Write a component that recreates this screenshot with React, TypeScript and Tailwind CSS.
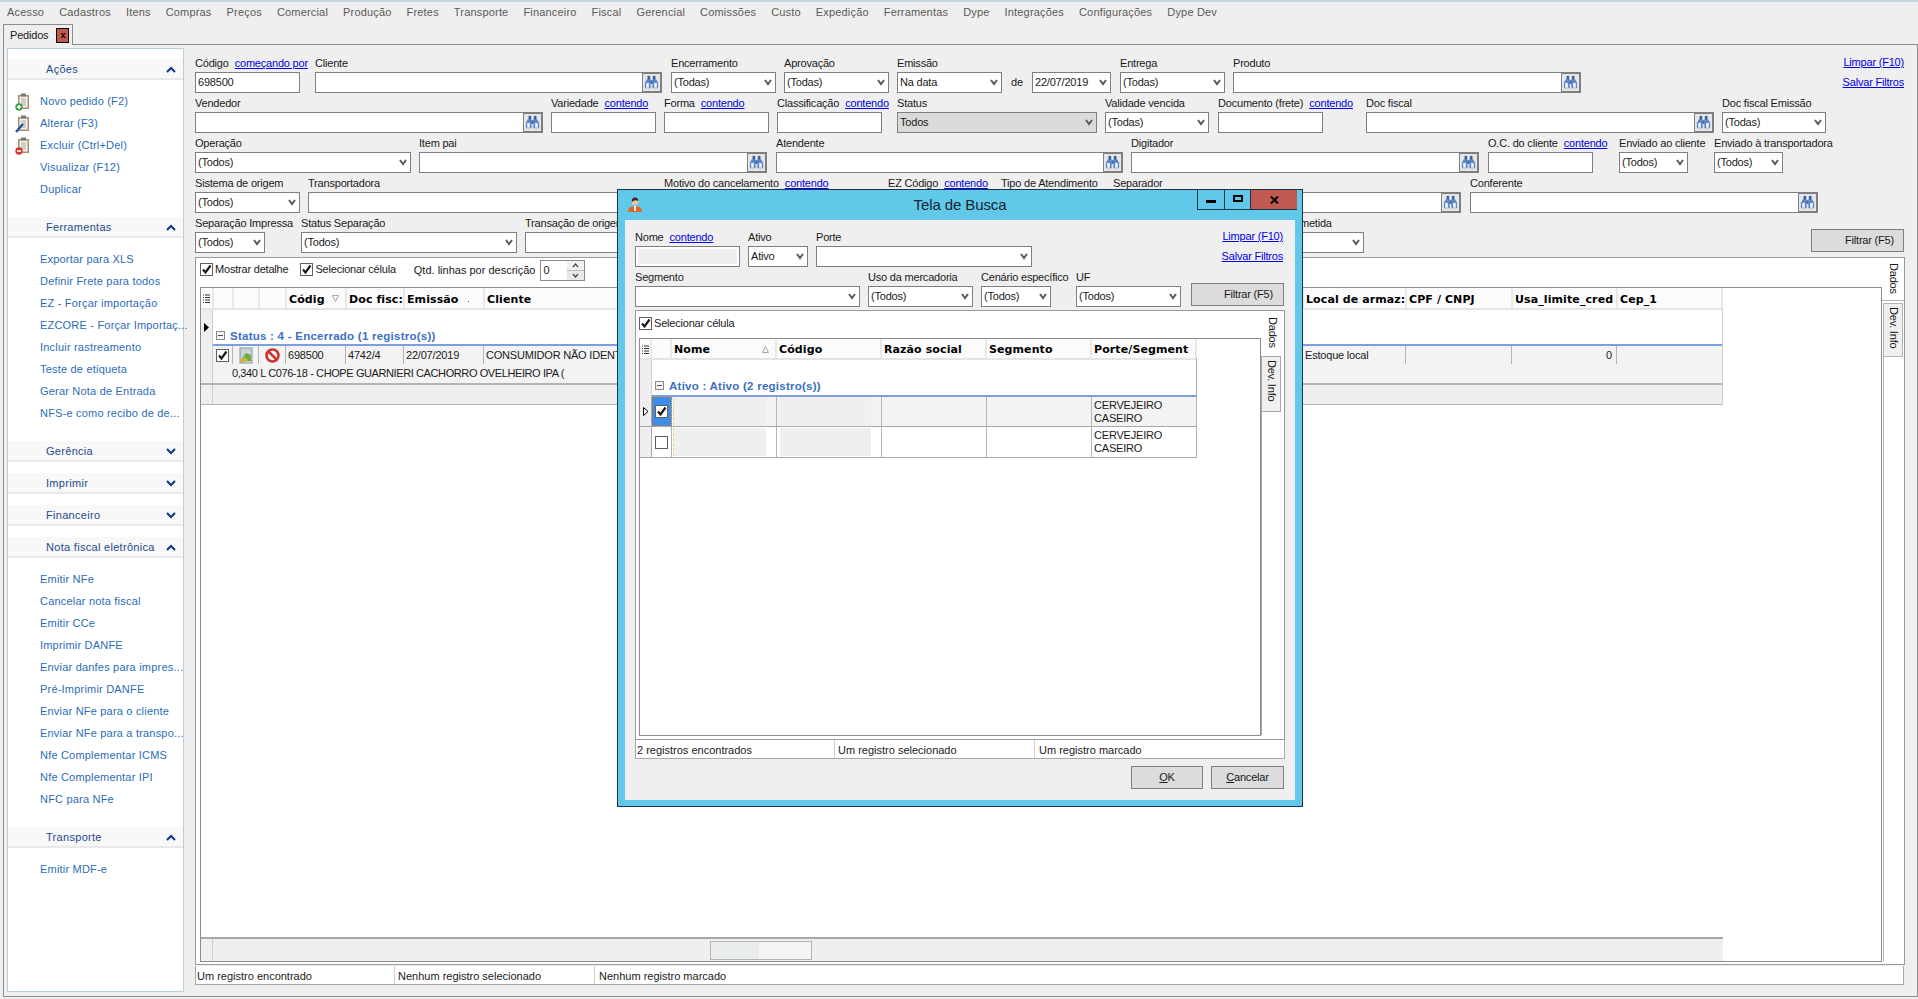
import type { ReactNode } from "react";

const menuItems = [
  "Acesso", "Cadastros", "Itens", "Compras", "Preços", "Comercial", "Produção", "Fretes", "Transporte",
  "Financeiro", "Fiscal", "Gerencial", "Comissões", "Custo", "Expedição", "Ferramentas", "Dype",
  "Integrações", "Configurações", "Dype Dev",
];

const notaItems = [
  "Emitir NFe", "Cancelar nota fiscal", "Emitir CCe", "Imprimir DANFE", "Enviar danfes para impres...",
  "Pré-Imprimir DANFE", "Enviar NFe para o cliente", "Enviar NFe para a transpo...", "Nfe Complementar ICMS",
  "Nfe Complementar IPI", "NFC para NFe",
];

const ferramentasItems = [
  "Exportar para XLS", "Definir Frete para todos", "EZ - Forçar importação", "EZCORE - Forçar Importaç...",
  "Incluir rastreamento", "Teste de etiqueta", "Gerar Nota de Entrada", "NFS-e como recibo de de...",
];

function Chevron({ up }: { up?: boolean }) {
  return (
    <svg width="10" height="7" viewBox="0 0 10 7" className="shrink-0">
      <path d={up ? "M1 6 L5 2 L9 6" : "M1 1 L5 5 L9 1"} fill="none" stroke="#0b3a8c" strokeWidth="2" />
    </svg>
  );
}

function SmallArrow() {
  return (
    <svg width="8" height="7" viewBox="0 0 8 7" className="shrink-0">
      <path d="M1 1 L4 5 L7 1" fill="none" stroke="#5a5a5a" strokeWidth="2" />
    </svg>
  );
}

function Binoculars() {
  return (
    <svg width="15" height="15" viewBox="0 0 17 17">
      <rect x="4" y="1" width="3" height="5" fill="#3a62a6" />
      <rect x="10" y="1" width="3" height="5" fill="#3a62a6" />
      <rect x="7" y="6" width="3" height="4" fill="#3a62a6" />
      <path d="M3 5 H7.5 V15 H1 V9 Z" fill="#5c86c8" />
      <path d="M14 5 H9.5 V15 H16 V9 Z" fill="#5c86c8" />
      <rect x="2.5" y="9" width="3" height="5.5" fill="#eef4fc" />
      <rect x="11.5" y="9" width="3" height="5.5" fill="#eef4fc" />
    </svg>
  );
}

function Clipboard({ kind }: { kind: "add" | "edit" | "del" }) {
  return (
    <svg width="15" height="18" viewBox="0 0 15 18">
      <rect x="3" y="2" width="11" height="14" fill="#a8906c" />
      <rect x="4.5" y="3.5" width="8" height="11" fill="#f4f4f0" />
      <rect x="6" y="0.5" width="5" height="3" fill="#777" />
      <path d="M6 6 H11 M6 8 H11 M6 10 H11 M6 12 H11" stroke="#aaa" strokeWidth="1" />
      {kind === "add" && (
        <>
          <circle cx="4" cy="14" r="3.7" fill="#3f9e4d" />
          <path d="M2 14 H6 M4 12 V16" stroke="#fff" strokeWidth="1.5" />
        </>
      )}
      {kind === "edit" && <path d="M1 17 L8 9" stroke="#1f56a8" strokeWidth="2.4" />}
      {kind === "del" && (
        <>
          <circle cx="4" cy="14" r="3.7" fill="#d6342c" />
          <path d="M2 14 H6" stroke="#fff" strokeWidth="1.6" />
        </>
      )}
    </svg>
  );
}

function Tick() {
  return (
    <svg width="11" height="11" viewBox="0 0 11 11">
      <path d="M2 5.5 L4.5 8.5 L9.5 1.5" fill="none" stroke="#1a1a1a" strokeWidth="2.2" />
    </svg>
  );
}

function CheckBox({ checked = true }: { checked?: boolean }) {
  return (
    <span className="flex h-[13px] w-[13px] shrink-0 items-center justify-center border border-[#5f5f5f] bg-white">
      {checked && <Tick />}
    </span>
  );
}

function MinusBox() {
  return (
    <span className="flex h-[9px] w-[9px] shrink-0 items-center justify-center border border-[#8a8a8a] bg-[#f4f4f4]">
      <span className="h-px w-[5px] bg-[#555]" />
    </span>
  );
}

function A({ children }: { children: ReactNode }) {
  return <span className="whitespace-nowrap text-[#0000e6] underline">{children}</span>;
}

function Field({ label, link, className, children }: { label?: string; link?: string; className: string; children: ReactNode }) {
  return (
    <div className={"flex shrink-0 flex-col " + className}>
      <div className="flex h-[16px] items-center gap-[6px] whitespace-nowrap pb-[2px]">
        <span>{label}</span>
        {link && <A>{link}</A>}
      </div>
      {children}
    </div>
  );
}

function TextBox({ value }: { value?: string }) {
  return <div className="flex h-[21px] items-center border border-[#7f7f7f] bg-white pl-[2px]">{value}</div>;
}

function Lookup() {
  return (
    <div className="flex h-[21px] items-center justify-end border border-[#7f7f7f] bg-white">
      <span className="flex h-[19px] w-[19px] items-center justify-center border border-[#7f7f7f] bg-[#e6e6e6]">
        <Binoculars />
      </span>
    </div>
  );
}

function Combo({ value, gray }: { value?: string; gray?: boolean }) {
  return (
    <div className={"flex h-[21px] items-center justify-between border border-[#7f7f7f] pl-[2px] pr-[3px] " + (gray ? "bg-[#dadada]" : "bg-white")}>
      <span>{value}</span>
      <SmallArrow />
    </div>
  );
}

function GrayButton({ className, children }: { className: string; children: ReactNode }) {
  return <div className={"flex items-center justify-center border border-[#7f7f7f] bg-[#dcdcdc] " + className}>{children}</div>;
}

function SectionHead({ title, up }: { title: string; up?: boolean }) {
  return (
    <div className="flex h-[21px] items-center justify-between border-b-2 border-[#e9e9e9] bg-[#f8f8f8] pl-[38px] pr-[7px] pt-[2px] text-[#1d4a8c]">
      <span className="tracking-[0.3px]">{title}</span>
      <Chevron up={up} />
    </div>
  );
}

function SideItem({ icon, children }: { icon?: ReactNode; children: ReactNode }) {
  return (
    <div className="flex h-[22px] items-center whitespace-nowrap pl-[7px] pt-[1px] text-[#2b6cb8]">
      <span className="flex w-[25px] shrink-0 items-center">{icon}</span>
      <span className="tracking-[0.2px]">{children}</span>
    </div>
  );
}

function Sidebar() {
  return (
    <div className="ml-[3px] h-[944px] w-[177px] shrink-0 border border-[#b9d0dd] bg-white pt-[10px]">
      <SectionHead title="Ações" up />
      <div className="pb-[17px] pt-[10px]">
        <SideItem icon={<Clipboard kind="add" />}>Novo pedido (F2)</SideItem>
        <SideItem icon={<Clipboard kind="edit" />}>Alterar (F3)</SideItem>
        <SideItem icon={<Clipboard kind="del" />}>Excluir (Ctrl+Del)</SideItem>
        <SideItem>Visualizar (F12)</SideItem>
        <SideItem>Duplicar</SideItem>
      </div>
      <SectionHead title="Ferramentas" up />
      <div className="pb-[17px] pt-[10px]">
        {ferramentasItems.map((t) => (
          <SideItem key={t}>{t}</SideItem>
        ))}
      </div>
      <div className="mb-[11px]">
        <SectionHead title="Gerência" />
      </div>
      <div className="mb-[11px]">
        <SectionHead title="Imprimir" />
      </div>
      <div className="mb-[11px]">
        <SectionHead title="Financeiro" />
      </div>
      <SectionHead title="Nota fiscal eletrônica" up />
      <div className="pb-[17px] pt-[10px]">
        {notaItems.map((t) => (
          <SideItem key={t}>{t}</SideItem>
        ))}
      </div>
      <SectionHead title="Transporte" up />
      <div className="pt-[10px]">
        <SideItem>Emitir MDF-e</SideItem>
      </div>
    </div>
  );
}

function FilterLinks() {
  return (
    <div className="ml-auto mr-[1px] flex flex-col items-end gap-[9px] pt-[1px]">
      <A>Limpar (F10)</A>
      <A>Salvar Filtros</A>
    </div>
  );
}

function FilterForm() {
  return (
    <div className="flex flex-col gap-[3px]">
      <div className="flex h-[37px]">
        <Field label="Código" link="começando por" className="w-[105px]"><TextBox value="698500" /></Field>
        <Field label="Cliente" className="ml-[15px] w-[347px]"><Lookup /></Field>
        <Field label="Encerramento" className="ml-[9px] w-[105px]"><Combo value="(Todas)" /></Field>
        <Field label="Aprovação" className="ml-[8px] w-[105px]"><Combo value="(Todas)" /></Field>
        <Field label="Emissão" className="ml-[8px] w-[105px]"><Combo value="Na data" /></Field>
        <div className="flex w-[30px] items-end justify-center pb-[5px]">de</div>
        <Field className="w-[79px]"><Combo value="22/07/2019" /></Field>
        <Field label="Entrega" className="ml-[9px] w-[105px]"><Combo value="(Todas)" /></Field>
        <Field label="Produto" className="ml-[8px] w-[348px]"><Lookup /></Field>
        <FilterLinks />
      </div>
      <div className="flex h-[37px]">
        <Field label="Vendedor" className="w-[348px]"><Lookup /></Field>
        <Field label="Variedade" link="contendo" className="ml-[8px] w-[105px]"><TextBox /></Field>
        <Field label="Forma" link="contendo" className="ml-[8px] w-[105px]"><TextBox /></Field>
        <Field label="Classificação" link="contendo" className="ml-[8px] w-[105px]"><TextBox /></Field>
        <Field label="Status" className="ml-[15px] w-[200px]"><Combo value="Todos" gray /></Field>
        <Field label="Validade vencida" className="ml-[8px] w-[104px]"><Combo value="(Todas)" /></Field>
        <Field label="Documento (frete)" link="contendo" className="ml-[9px] w-[105px]"><TextBox /></Field>
        <Field label="Doc fiscal" className="ml-[43px] w-[348px]"><Lookup /></Field>
        <Field label="Doc fiscal Emissão" className="ml-[8px] w-[104px]"><Combo value="(Todas)" /></Field>
      </div>
      <div className="flex h-[37px]">
        <Field label="Operação" className="w-[216px]"><Combo value="(Todos)" /></Field>
        <Field label="Item pai" className="ml-[8px] w-[348px]"><Lookup /></Field>
        <Field label="Atendente" className="ml-[9px] w-[347px]"><Lookup /></Field>
        <Field label="Digitador" className="ml-[8px] w-[348px]"><Lookup /></Field>
        <Field label="O.C. do cliente" link="contendo" className="ml-[9px] w-[105px]"><TextBox /></Field>
        <Field label="Enviado ao cliente" className="ml-[26px] w-[69px]"><Combo value="(Todos)" /></Field>
        <Field label="Enviado à transportadora" className="ml-[26px] w-[69px]"><Combo value="(Todos)" /></Field>
      </div>
      <div className="flex h-[37px]">
        <Field label="Sistema de origem" className="w-[105px]"><Combo value="(Todos)" /></Field>
        <Field label="Transportadora" className="ml-[8px] w-[348px]"><Lookup /></Field>
        <Field label="Motivo do cancelamento" link="contendo" className="ml-[8px] w-[216px]"><TextBox /></Field>
        <Field label="EZ Código" link="contendo" className="ml-[8px] w-[105px]"><TextBox /></Field>
        <Field label="Tipo de Atendimento" className="ml-[8px] w-[104px]"><Combo /></Field>
        <Field label="Separador" className="ml-[8px] w-[348px]"><Lookup /></Field>
        <Field label="Conferente" className="ml-[9px] w-[348px]"><Lookup /></Field>
      </div>
      <div className="flex h-[37px]">
        <Field label="Separação Impressa" className="w-[70px]"><Combo value="(Todos)" /></Field>
        <Field label="Status Separação" className="ml-[36px] w-[216px]"><Combo value="(Todos)" /></Field>
        <Field label="Transação de origem" className="ml-[8px] w-[216px]"><TextBox /></Field>
        <Field label="Comprometida" className="ml-[521px] w-[102px]"><Combo /></Field>
        <GrayButton className="ml-auto mr-[1px] mt-[13px] h-[23px] w-[93px] pl-[24px]">Filtrar (F5)</GrayButton>
      </div>
    </div>
  );
}

function HeadCell({ className, children }: { className: string; children?: ReactNode }) {
  return (
    <div className={"relative flex h-full shrink-0 items-center overflow-hidden whitespace-nowrap border-r-2 border-[#e8e8e8] bg-[#fbfbfb] pl-[2px] pt-[2px] font-['DejaVu_Sans',sans-serif] text-[11px] font-bold tracking-[0.1px] text-black " + className}>
      {children}
    </div>
  );
}

function GripIcon() {
  return (
    <svg width="7" height="10" viewBox="0 0 7 10">
      <path d="M0 1 H1 M0 3.5 H1 M0 6 H1 M0 8.5 H1 M2 1 H7 M2 3.5 H7 M2 6 H7 M2 8.5 H7" stroke="#333" strokeWidth="1" />
    </svg>
  );
}

function SortMark({ down }: { down?: boolean }) {
  return (
    <svg width="7" height="7" viewBox="0 0 7 7" className="absolute right-[6px] top-[7px]">
      <path d={down ? "M0.5 0.5 H6.5 L3.5 6.5 Z" : "M0.5 6.5 H6.5 L3.5 0.5 Z"} fill="none" stroke="#a5a5a5" />
    </svg>
  );
}

function BodyCell({ className, children }: { className: string; children?: ReactNode }) {
  return (
    <div className={"flex h-full shrink-0 items-center overflow-hidden whitespace-nowrap border-r border-[#b4b4b4] pl-[2px] " + className}>
      {children}
    </div>
  );
}

function MainGrid() {
  return (
    <div className="ml-[4px] flex h-[675px] w-[1682px] flex-col border border-[#8c8c8c]">
      <div className="flex-1">
        <div className="w-[1522px] border-r border-[#cfcfcf]">
          <div className="flex h-[22px] border-b-2 border-[#e4e4e4]">
            <HeadCell className="w-[13px]"><GripIcon /></HeadCell>
            <HeadCell className="w-[20px]" />
            <HeadCell className="w-[26px]" />
            <HeadCell className="w-[27px]" />
            <HeadCell className="w-[60px]">
              Códig
              <SortMark down />
            </HeadCell>
            <HeadCell className="w-[58px]">Doc fisc:</HeadCell>
            <HeadCell className="w-[80px]">
              Emissão
              <span className="absolute right-[14px] top-[13px] h-px w-px bg-[#555]" />
            </HeadCell>
            <HeadCell className="w-[819px]">Cliente</HeadCell>
            <HeadCell className="w-[103px]">Local de armaz:</HeadCell>
            <HeadCell className="w-[106px]">CPF / CNPJ</HeadCell>
            <HeadCell className="w-[105px]">Usa_limite_cred</HeadCell>
            <HeadCell className="w-[105px]">Cep_1</HeadCell>
          </div>
          <div className="flex">
            <div className="flex w-[12px] shrink-0 flex-col items-center border-r border-[#cdcdcd] bg-[#efefef] pt-[13px]">
              <svg width="5" height="9" viewBox="0 0 5 9">
                <path d="M0 0 L5 4.5 L0 9 Z" fill="#000" />
              </svg>
            </div>
            <div className="flex-1">
              <div className="flex h-[36px] items-end gap-[5px] border-b-2 border-[#7ba0dc] pb-[2px] pl-[3px] text-[11.5px] font-bold tracking-[0.25px] text-[#3a6fc4]">
                <span className="mb-[2px]"><MinusBox /></span>
                Status : 4 - Encerrado (1 registro(s))
              </div>
              <div className="flex h-[18px] bg-[#f3f3f3]">
                <BodyCell className="w-[20px] justify-center !pl-0"><CheckBox /></BodyCell>
                <BodyCell className="w-[26px] justify-center !pl-0">
                  <svg width="16" height="17" viewBox="0 0 16 17">
                    <rect x="2" y="1" width="12" height="15" fill="#c9d3d8" stroke="#8a9aa3" />
                    <path d="M3 13 L8 6 L13 8 V14 H3 Z" fill="#6fae3c" />
                    <path d="M2 14 L7 10 L10 13 L5 16 Z" fill="#d8b23a" />
                  </svg>
                </BodyCell>
                <BodyCell className="w-[27px] justify-center !pl-0">
                  <svg width="15" height="15" viewBox="0 0 15 15">
                    <circle cx="7.5" cy="7.5" r="6" fill="#fff" stroke="#d2322c" strokeWidth="2.6" />
                    <path d="M3.5 3.5 L11.5 11.5" stroke="#d2322c" strokeWidth="2.6" />
                  </svg>
                </BodyCell>
                <BodyCell className="w-[60px]">698500</BodyCell>
                <BodyCell className="w-[58px]">4742/4</BodyCell>
                <BodyCell className="w-[80px]">22/07/2019</BodyCell>
                <BodyCell className="w-[819px]">CONSUMIDOR NÃO IDENTIFICADO</BodyCell>
                <BodyCell className="w-[103px]">Estoque local</BodyCell>
                <BodyCell className="w-[106px]" />
                <BodyCell className="w-[105px] justify-end pr-[4px]">0</BodyCell>
                <BodyCell className="w-[104px] !border-r-0" />
              </div>
              <div className="flex h-[19px] items-center bg-[#f3f3f3] pl-[19px] tracking-[-0.4px]">
                0,340 L C076-18 - CHOPE GUARNIERI CACHORRO OVELHEIRO IPA (
              </div>
            </div>
          </div>
          <div className="flex h-[22px] border-y-2 border-b border-[#b4b4b4] bg-[#efefef]">
            <div className="w-[12px] border-r border-[#cdcdcd]" />
          </div>
        </div>
      </div>
      <div className="flex h-[24px] w-[1522px] items-center border-t-2 border-[#a8a8a8] bg-[#efefef]">
        <div className="h-full w-[12px] border-r border-[#cdcdcd]" />
        <div className="ml-[497px] flex h-[19px] w-[102px] border border-[#b4b4b4] bg-[#f4f4f4]">
          <div className="h-full w-[48px] bg-[#e8ecec]" />
        </div>
      </div>
    </div>
  );
}

function VerticalTab({ className, children }: { className: string; children: ReactNode }) {
  return <div className={"flex shrink-0 items-center [writing-mode:vertical-rl] " + className}>{children}</div>;
}

function GridPanel() {
  return (
    <div className="mt-[4px] flex h-[708px] w-[1710px] border border-[#9a9a9a] bg-white">
      <div className="w-[1686px] shrink-0">
        <div className="flex h-[29px] items-center pb-[4px] pl-[4px]">
          <span className="mb-[2px]"><CheckBox /></span>
          <span className="mb-[2px] ml-[2px]">Mostrar detalhe</span>
          <span className="mb-[2px] ml-[12px]"><CheckBox /></span>
          <span className="mb-[2px] ml-[2px]">Selecionar célula</span>
          <span className="ml-[18px] tracking-normal">Qtd. linhas por descrição</span>
          <div className="ml-[5px] flex h-[21px] w-[45px] items-center justify-between border border-[#8a8a8a] pl-[2px]">
            0
            <div className="flex h-full w-[17px] flex-col">
              <span className="flex flex-1 items-center justify-center border-b border-[#bbb] bg-[#f0f0f0]">
                <svg width="7" height="5" viewBox="0 0 7 5"><path d="M1 4 L3.5 1 L6 4" fill="none" stroke="#444" strokeWidth="1.2" /></svg>
              </span>
              <span className="flex flex-1 items-center justify-center bg-[#e8e8e8]">
                <svg width="7" height="5" viewBox="0 0 7 5"><path d="M1 1 L3.5 4 L6 1" fill="none" stroke="#444" strokeWidth="1.2" /></svg>
              </span>
            </div>
          </div>
        </div>
        <MainGrid />
      </div>
      <div className="flex flex-1 flex-col">
        <VerticalTab className="h-[43px] border-b border-[#b4b4b4] pt-[5px]">Dados</VerticalTab>
        <VerticalTab className="ml-[1px] mt-[2px] h-[54px] w-[20px] border border-[#b4b4b4] bg-[#efefef] pt-[3px]">Dev. Info</VerticalTab>
        <div className="mb-[3px] ml-[1px] flex-1 border-l border-[#b4b4b4]" />
      </div>
    </div>
  );
}

function StatusBar({ cells, className }: { cells: string[]; className: string }) {
  return (
    <div className={"flex items-center border-b border-l border-r border-[#a8a8a8] bg-white tracking-normal " + className}>
      <div className="flex h-full w-[199px] items-center border-r border-[#cfcfcf] pl-px pt-[3px]">{cells[0]}</div>
      <div className="flex h-full w-[200px] items-center border-r border-[#cfcfcf] pl-[3px] pt-[3px]">{cells[1]}</div>
      <div className="flex h-full items-center pl-[4px] pt-[3px]">{cells[2]}</div>
    </div>
  );
}

function Redacted({ className }: { className: string }) {
  return <div className={"h-full bg-[#efefef] " + className} />;
}

function DialogRow({ selected, className }: { selected?: boolean; className: string }) {
  return (
    <div className={"flex border-b border-[#a8a8a8] " + className}>
      <div className="flex h-full w-[12px] shrink-0 items-center justify-center border-r border-[#a8a8a8] bg-[#efefef]">
        {selected && (
          <svg width="6" height="9" viewBox="0 0 6 9">
            <path d="M0.5 0.5 L5 4.5 L0.5 8.5 Z" fill="#fff" stroke="#000" />
          </svg>
        )}
      </div>
      <BodyCell className={"w-[20px] justify-center !pl-0 " + (selected ? "bg-[#3c8eea] outline-1 -outline-offset-1 outline-dotted outline-[#b8722c]" : "")}>
        <CheckBox checked={!!selected} />
      </BodyCell>
      <BodyCell className="w-[105px] py-[1px] !pl-px">
        <Redacted className="w-[93px] border-l border-dashed border-l-[#f5cf8a]" />
      </BodyCell>
      <BodyCell className="w-[105px] py-[1px] !pl-[3px]"><Redacted className="w-[91px]" /></BodyCell>
      <BodyCell className="w-[105px]" />
      <BodyCell className="w-[105px]" />
      <BodyCell className="w-[105px] whitespace-normal leading-[13px]">CERVEJEIRO<br />CASEIRO</BodyCell>
    </div>
  );
}

function SearchDialog() {
  return (
    <div className="absolute left-[617px] top-[189px] flex h-[618px] w-[686px] flex-col border border-[#1d3644] bg-[#62c8ea]">
      <div className="relative flex h-[30px] shrink-0 items-start justify-end pr-[5px]">
        <svg width="16" height="17" viewBox="0 0 16 17" className="absolute left-[9px] top-[6px]">
          <path d="M1 16 Q1 10 8 10 Q15 10 15 16 Z" fill="#e8641c" />
          <rect x="7" y="10" width="2" height="5" fill="#fff" />
          <circle cx="8" cy="6" r="3.2" fill="#f2c29c" />
          <path d="M4.8 6 Q4.5 1.5 8 1.5 Q11.5 1.5 11.2 5 Q8 3 4.8 6 Z" fill="#2b2b2b" />
        </svg>
        <div className="absolute inset-x-0 top-[7px] text-center text-[15px] tracking-[-0.1px] text-[#16262e]">Tela de Busca</div>
        <div className="relative flex h-[20px] w-[27px] items-center justify-center border-b border-l border-[#1d3644]">
          <span className="mt-[4px] h-[3px] w-[10px] bg-black" />
        </div>
        <div className="relative flex h-[20px] w-[26px] items-center justify-center border-b border-l border-[#1d3644]">
          <span className="mb-[3px] h-[7px] w-[10px] border-2 border-black" />
        </div>
        <div className="relative flex h-[20px] w-[47px] items-center justify-center border-b border-l border-[#1d3644] bg-[#c0594f]">
          <svg width="9" height="8" viewBox="0 0 9 8"><path d="M1 0.5 L8 7.5 M8 0.5 L1 7.5" stroke="#000" strokeWidth="2" /></svg>
        </div>
      </div>
      <div className="mx-[7px] flex h-[580px] flex-col bg-[#efefef] pl-[10px] pr-[11px] pt-[10px]">
        <div className="flex h-[37px]">
          <Field label="Nome" link="contendo" className="w-[105px]">
            <div className="h-[21px] border border-[#7f7f7f] bg-white p-[2px]"><div className="h-full bg-[#efefef]" /></div>
          </Field>
          <Field label="Ativo" className="ml-[8px] w-[60px]"><Combo value="Ativo" /></Field>
          <Field label="Porte" className="ml-[8px] w-[216px]"><Combo /></Field>
          <FilterLinks />
        </div>
        <div className="mt-[3px] flex h-[37px]">
          <Field label="Segmento" className="w-[225px]"><Combo /></Field>
          <Field label="Uso da mercadoria" className="ml-[8px] w-[105px]"><Combo value="(Todos)" /></Field>
          <Field label="Cenário específico" className="ml-[8px] w-[70px]"><Combo value="(Todos)" /></Field>
          <Field label="UF" className="ml-[25px] w-[105px]"><Combo value="(Todos)" /></Field>
          <GrayButton className="ml-[10px] mt-[13px] h-[23px] w-[93px] pl-[22px]">Filtrar (F5)</GrayButton>
        </div>
        <div className="mt-[3px] flex h-[430px] w-[650px] shrink-0 border border-[#9a9a9a] bg-white">
          <div className="w-[625px] shrink-0">
            <div className="flex h-[27px] items-center pb-[2px] pl-[3px]">
              <CheckBox />
              <span className="ml-[2px]">Selecionar célula</span>
            </div>
            <div className="ml-[3px] h-[398px] w-[622px] border border-[#8c8c8c]">
              <div className="w-[557px] border-r border-[#a8a8a8]">
                <div className="flex h-[21px] border-b-2 border-[#e4e4e4]">
                  <HeadCell className="w-[12px]"><GripIcon /></HeadCell>
                  <HeadCell className="w-[20px]" />
                  <HeadCell className="w-[105px]">
                    Nome
                    <SortMark />
                  </HeadCell>
                  <HeadCell className="w-[105px]">Código</HeadCell>
                  <HeadCell className="w-[105px]">Razão social</HeadCell>
                  <HeadCell className="w-[105px]">Segmento</HeadCell>
                  <HeadCell className="w-[105px]">Porte/Segment</HeadCell>
                </div>
                <div className="flex h-[37px]">
                  <div className="w-[12px] border-r border-[#cdcdcd] bg-[#efefef]" />
                  <div className="flex flex-1 items-end gap-[5px] border-b-2 border-[#7ba0dc] pb-[3px] pl-[3px] text-[11.5px] font-bold tracking-[0.25px] text-[#3a6fc4]">
                    <span className="mb-[2px]"><MinusBox /></span>
                    Ativo : Ativo (2 registro(s))
                  </div>
                </div>
                <DialogRow selected className="h-[30px] bg-[#f3f3f3]" />
                <DialogRow className="h-[31px] bg-white" />
              </div>
            </div>
          </div>
          <div className="flex flex-1 flex-col">
            <VerticalTab className="h-[45px] pt-[6px]">Dados</VerticalTab>
            <VerticalTab className="h-[56px] w-[20px] border border-[#a8a8a8] bg-[#efefef] pt-[3px]">Dev. Info</VerticalTab>
            <div className="mb-[4px] flex-1 border-l border-[#a8a8a8]" />
          </div>
        </div>
        <StatusBar className="h-[19px] w-[650px] shrink-0" cells={["2 registros encontrados", "Um registro selecionado", "Um registro marcado"]} />
        <div className="mt-[7px] flex justify-end gap-[8px]">
          <GrayButton className="h-[23px] w-[72px]"><span><u>O</u>K</span></GrayButton>
          <GrayButton className="h-[23px] w-[73px]"><span><u>C</u>ancelar</span></GrayButton>
        </div>
      </div>
    </div>
  );
}

export default function App() {
  return (
    <div className="relative flex h-[999px] w-[1918px] flex-col overflow-hidden bg-[#efefef] font-['Liberation_Sans',Arial,sans-serif] text-[11px] leading-none tracking-[-0.2px] text-[#1a1a1a]">
      <div className="h-[2px] shrink-0 bg-[#c4d9df]" />
      <div className="flex h-[22px] shrink-0 items-center gap-[15px] pb-[2px] pl-[7px] tracking-[0.18px] text-[#5a5a5a]">
        {menuItems.map((m) => (
          <span key={m}>{m}</span>
        ))}
      </div>
      <div className="flex h-[20px] shrink-0 pl-[3px]">
        <div className="z-10 flex h-[21px] w-[70px] items-center gap-[8px] border-l border-r border-t border-[#8c8c8c] bg-[#efefef] pl-[6px]">
          Pedidos
          <span className="flex h-[15px] w-[13px] items-center justify-center border border-black bg-[#c0584f] text-[9px] font-bold text-black">x</span>
        </div>
      </div>
      <div className="ml-[3px] flex h-[953px] w-[1915px] shrink-0 border border-[#8c8c8c] pt-[3px]">
        <Sidebar />
        <div className="ml-[11px] flex-1 pr-[13px] pt-[8px]">
          <FilterForm />
          <GridPanel />
          <StatusBar className="mt-px h-[19px] w-[1709px]" cells={["Um registro encontrado", "Nenhum registro selecionado", "Nenhum registro marcado"]} />
        </div>
      </div>
      <SearchDialog />
    </div>
  );
}
